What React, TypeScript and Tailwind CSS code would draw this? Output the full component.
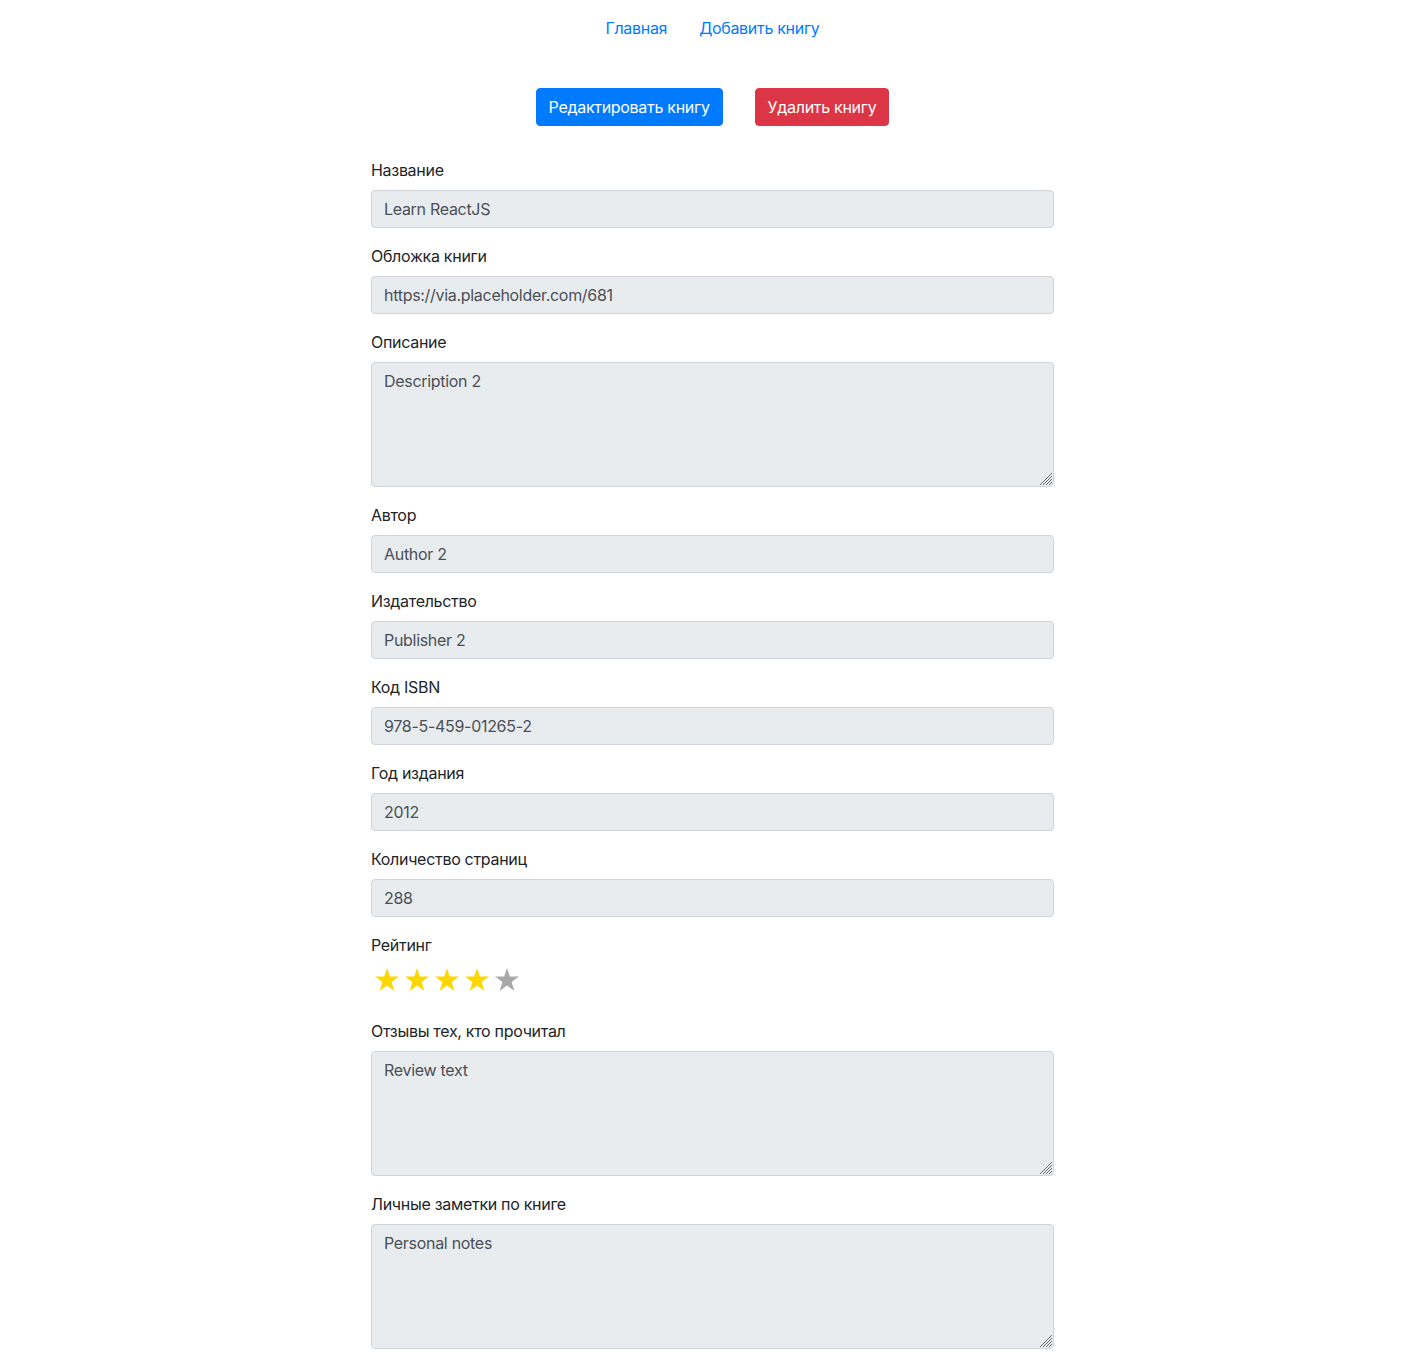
import React from 'react';

const fields = [
  { label: 'Название', value: 'Learn ReactJS' },
  { label: 'Обложка книги', value: 'https://via.placeholder.com/681' },
  { label: 'Описание', value: 'Description 2', area: true },
  { label: 'Автор', value: 'Author 2' },
  { label: 'Издательство', value: 'Publisher 2' },
  { label: 'Код ISBN', value: '978-5-459-01265-2' },
  { label: 'Год издания', value: '2012' },
  { label: 'Количество страниц', value: '288' },
];

const Star = ({ filled }: { filled: boolean }) => (
  <svg width="24" height="23" viewBox="0 0 24 23">
    <polygon
      points="12,0 14.8,8.6 24,8.6 16.6,14 19.4,23 12,17.4 4.6,23 7.4,14 0,8.6 9.2,8.6"
      fill={filled ? '#ffd700' : '#a9a9a9'}
    />
  </svg>
);

// resize grip drawn on top of the textarea corner
const Grip = () => (
  <svg className="absolute right-[2px] bottom-[2px] pointer-events-none" width="13" height="13" viewBox="0 0 13 13">
    <g stroke="#6b6b6b" strokeWidth="1">
      <line x1="13" y1="1" x2="1" y2="13" />
      <line x1="13" y1="4" x2="4" y2="13" />
      <line x1="13" y1="7" x2="7" y2="13" />
      <line x1="13" y1="10" x2="10" y2="13" />
    </g>
  </svg>
);

const Field = ({ label, value, area }: { label: string; value: string; area?: boolean }) => (
  <div className="mb-4">
    <label className="block mb-2 leading-6 text-[#212529]">{label}</label>
    {area ? (
      <div className="relative">
        <textarea
          readOnly
          value={value}
          className="block w-full h-[125px] px-3 py-1.5 leading-6 bg-[#e9ecef] border border-[#ced4da] rounded text-[#495057] outline-none resize-none"
        />
        <Grip />
      </div>
    ) : (
      <div className="h-[38px] px-3 py-1.5 leading-6 bg-[#e9ecef] border border-[#ced4da] rounded text-[#495057]">
        {value}
      </div>
    )}
  </div>
);

const App = () => {
  return (
    <div className="min-h-screen bg-white font-['Inter','Noto_Sans',sans-serif] text-base tracking-[-0.3px]">
      <nav className="pt-2">
        <ul className="flex justify-center">
          <li>
            <a href="#" className="block px-4 py-2 leading-6 text-[#007bff]">Главная</a>
          </li>
          <li>
            <a href="#" className="block px-4 py-2 leading-6 text-[#007bff]">Добавить книгу</a>
          </li>
        </ul>
      </nav>

      <div className="flex justify-center gap-8 mt-10">
        <button className="h-[38px] px-3 leading-6 text-white bg-[#007bff] border border-[#007bff] rounded">
          Редактировать книгу
        </button>
        <button className="h-[38px] px-3 leading-6 text-white bg-[#dc3545] border border-[#dc3545] rounded">
          Удалить книгу
        </button>
      </div>

      <form className="w-[683px] mx-auto mt-8">
        {fields.map((f) => (
          <Field key={f.label} label={f.label} value={f.value} area={f.area} />
        ))}

        <div className="mb-4">
          <label className="block mb-2 leading-6 text-[#212529]">Рейтинг</label>
          <div className="h-[38px] flex items-start gap-[6px] pl-1 pt-[3px]">
            {[1, 2, 3, 4, 5].map((n) => (
              <Star key={n} filled={n <= 4} />
            ))}
          </div>
        </div>

        <Field label="Отзывы тех, кто прочитал" value="Review text" area />
        <Field label="Личные заметки по книге" value="Personal notes" area />
      </form>
    </div>
  );
};

export default App;
